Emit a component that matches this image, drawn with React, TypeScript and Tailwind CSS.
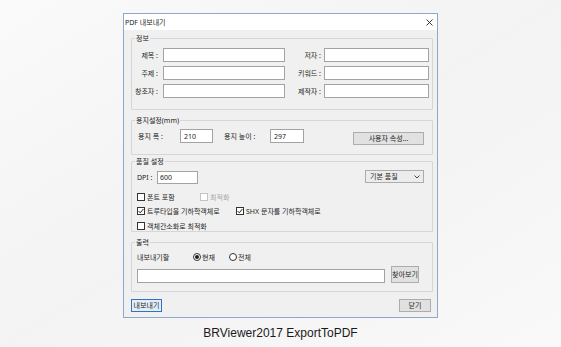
import React from 'react'

const ui = "font-['Noto_Sans','Noto_Sans_CJK_KR',sans-serif] text-[7px] leading-[9px] text-[#1e1e1e]"

function Group({ label, className, children }: { label: string; className?: string; children: React.ReactNode }) {
  return (
    <div className={`relative border border-[#d6d6d6] rounded-[1px] ${className ?? ''}`}>
      <span className="absolute left-[3px] top-[-5px] bg-[#f0f0f0] px-[1px] whitespace-nowrap">{label}</span>
      {children}
    </div>
  )
}

function Field({ width, value }: { width: string; value?: string }) {
  return (
    <div className={`${width} h-[14px] bg-white border border-[#a3a3a3] flex items-center pl-[3px]`}>
      {value}
    </div>
  )
}

function Label({ width, text }: { width: string; text: string }) {
  return <div className={`${width} flex justify-end whitespace-nowrap`}>{text}</div>
}

function Button({ text, className }: { text: string; className?: string }) {
  return (
    <div
      className={`h-[13px] flex items-center justify-center bg-[#e1e1e1] border border-[#adadad] whitespace-nowrap ${className ?? ''}`}
    >
      {text}
    </div>
  )
}

function CheckBox({ checked, disabled }: { checked?: boolean; disabled?: boolean }) {
  return (
    <div
      className={`w-[8px] h-[8px] shrink-0 bg-white border flex items-center justify-center ${
        disabled ? 'border-[#c4c4c4]' : 'border-[#333333]'
      }`}
    >
      {checked && (
        <svg width="6" height="6" viewBox="0 0 6 6">
          <path d="M0.6 3.1 L2.3 4.8 L5.4 1" stroke="#1e1e1e" strokeWidth="1" fill="none" />
        </svg>
      )}
    </div>
  )
}

function Check({ text, checked, disabled, width }: { text: string; checked?: boolean; disabled?: boolean; width?: string }) {
  return (
    <div className={`flex items-center gap-[2px] whitespace-nowrap ${width ?? ''} ${disabled ? 'text-[#a6a6a6]' : ''}`}>
      <CheckBox checked={checked} disabled={disabled} />
      <span>{text}</span>
    </div>
  )
}

function Radio({ text, checked, width }: { text: string; checked?: boolean; width?: string }) {
  return (
    <div className={`flex items-center gap-[1px] whitespace-nowrap ${width ?? ''}`}>
      <div className="w-[8px] h-[8px] rounded-full border border-[#333333] bg-white flex items-center justify-center">
        {checked && <div className="w-[4px] h-[4px] rounded-full bg-[#1e1e1e]" />}
      </div>
      <span>{text}</span>
    </div>
  )
}

export default function App() {
  return (
    <div className="w-[561px] h-[347px] overflow-hidden flex flex-col items-center pt-[13px] bg-gradient-to-br from-[#fafafa] via-[#f3f3f3] to-[#f9f9f9]">
      <div className={`w-[315px] h-[305px] border border-[#8ea8ca] bg-[#f0f0f0] flex flex-col ${ui}`}>
        {/* Title bar */}
        <div className="h-[16px] bg-white flex items-center justify-between pl-[1px] pr-[4px]">
          <span>PDF 내보내기</span>
          <svg width="7" height="7" viewBox="0 0 7 7">
            <path d="M0.5 0.5 L6.5 6.5 M6.5 0.5 L0.5 6.5" stroke="#222" strokeWidth="0.9" />
          </svg>
        </div>

        <div className="flex flex-col pl-[7px] pr-[4px] pt-[8px]">
          {/* 정보 */}
          <Group label="정보" className="h-[72px] pt-[9px] flex flex-col gap-[4px]">
            {[
              ['제목 :', '저자 :'],
              ['주제 :', '키워드 :'],
              ['창조자 :', '제작자 :'],
            ].map(([l, r]) => (
              <div key={l} className="flex items-center">
                <Label width="w-[26px]" text={l} />
                <div className="ml-[5px]">
                  <Field width="w-[122px]" />
                </div>
                <Label width="w-[36px]" text={r} />
                <div className="ml-[3px]">
                  <Field width="w-[105px]" />
                </div>
              </div>
            ))}
          </Group>

          {/* 용지설정 */}
          <Group label="용지설정(mm)" className="h-[35px] mt-[10px] pt-[8px] pl-[6px]">
            <div className="flex items-start">
              <div className="w-[42px] h-[14px] flex items-center whitespace-nowrap">용지 폭 :</div>
              <Field width="w-[33px]" value="210" />
              <div className="ml-[11px] w-[46px] h-[14px] flex items-center whitespace-nowrap">용지 높이 :</div>
              <Field width="w-[34px]" value="297" />
              <Button text="사용자 속성..." className="ml-[49px] mt-[3px] w-[71px]" />
            </div>
          </Group>

          {/* 품질 설정 */}
          <Group label="품질 설정" className="h-[71px] mt-[6px] pt-[9px] pl-[5px] pr-[8px]">
            <div className="flex items-start justify-between">
              <div className="flex items-center">
                <div className="w-[20px] whitespace-nowrap">DPI :</div>
                <div className="w-[41px] h-[13px] bg-white border border-[#a3a3a3] flex items-center pl-[2px]">600</div>
              </div>
              <div className="mt-[-1px] w-[59px] h-[13px] bg-[#ececec] border border-[#acacac] flex items-center justify-between pl-[4px] pr-[3px]">
                <span>기본 품질</span>
                <svg width="6" height="4" viewBox="0 0 6 4">
                  <path d="M0.5 0.5 L3 3 L5.5 0.5" stroke="#333" strokeWidth="0.9" fill="none" />
                </svg>
              </div>
            </div>
            <div className="flex items-center h-[8px] mt-[9px]">
              <Check text="폰트 포함" width="w-[63px]" />
              <Check text="최적화" disabled />
            </div>
            <div className="flex items-center h-[8px] mt-[6px]">
              <Check text="트루타입을 기하학객체로" checked width="w-[99px]" />
              <Check text="SHX 문자를 기하학객체로" checked />
            </div>
            <div className="flex items-center h-[8px] mt-[7px]">
              <Check text="객체간소화로 최적화" />
            </div>
          </Group>

          {/* 출력 */}
          <Group label="출력" className="h-[50px] mt-[10px] pt-[9px] pl-[5px]">
            <div className="flex items-center h-[10px]">
              <div className="w-[56px] whitespace-nowrap">내보내기할</div>
              <Radio text="현재" checked width="w-[36px]" />
              <Radio text="전체" />
            </div>
            <div className="flex items-end mt-[4px] gap-[6px]">
              <div className="w-[248px] h-[14px] bg-white border border-[#a3a3a3]" />
              <div className="w-[28px] h-[17px] flex items-center justify-center bg-[#e1e1e1] border border-[#adadad] whitespace-nowrap">
                찾아보기
              </div>
            </div>
          </Group>

          {/* Buttons */}
          <div className="flex justify-between mt-[7px] pr-[2px]">
            <div className="w-[31px] h-[13px] flex items-center justify-center bg-[#e5eef8] border border-[#2f73c4] whitespace-nowrap">
              내보내기
            </div>
            <Button text="닫기" className="w-[32px]" />
          </div>
        </div>
      </div>

      <div className="mt-[8px] font-['Liberation_Sans',Arial,sans-serif] text-[12px] leading-[14px] text-[#1a1a1a]">
        BRViewer2017 ExportToPDF
      </div>
    </div>
  )
}
